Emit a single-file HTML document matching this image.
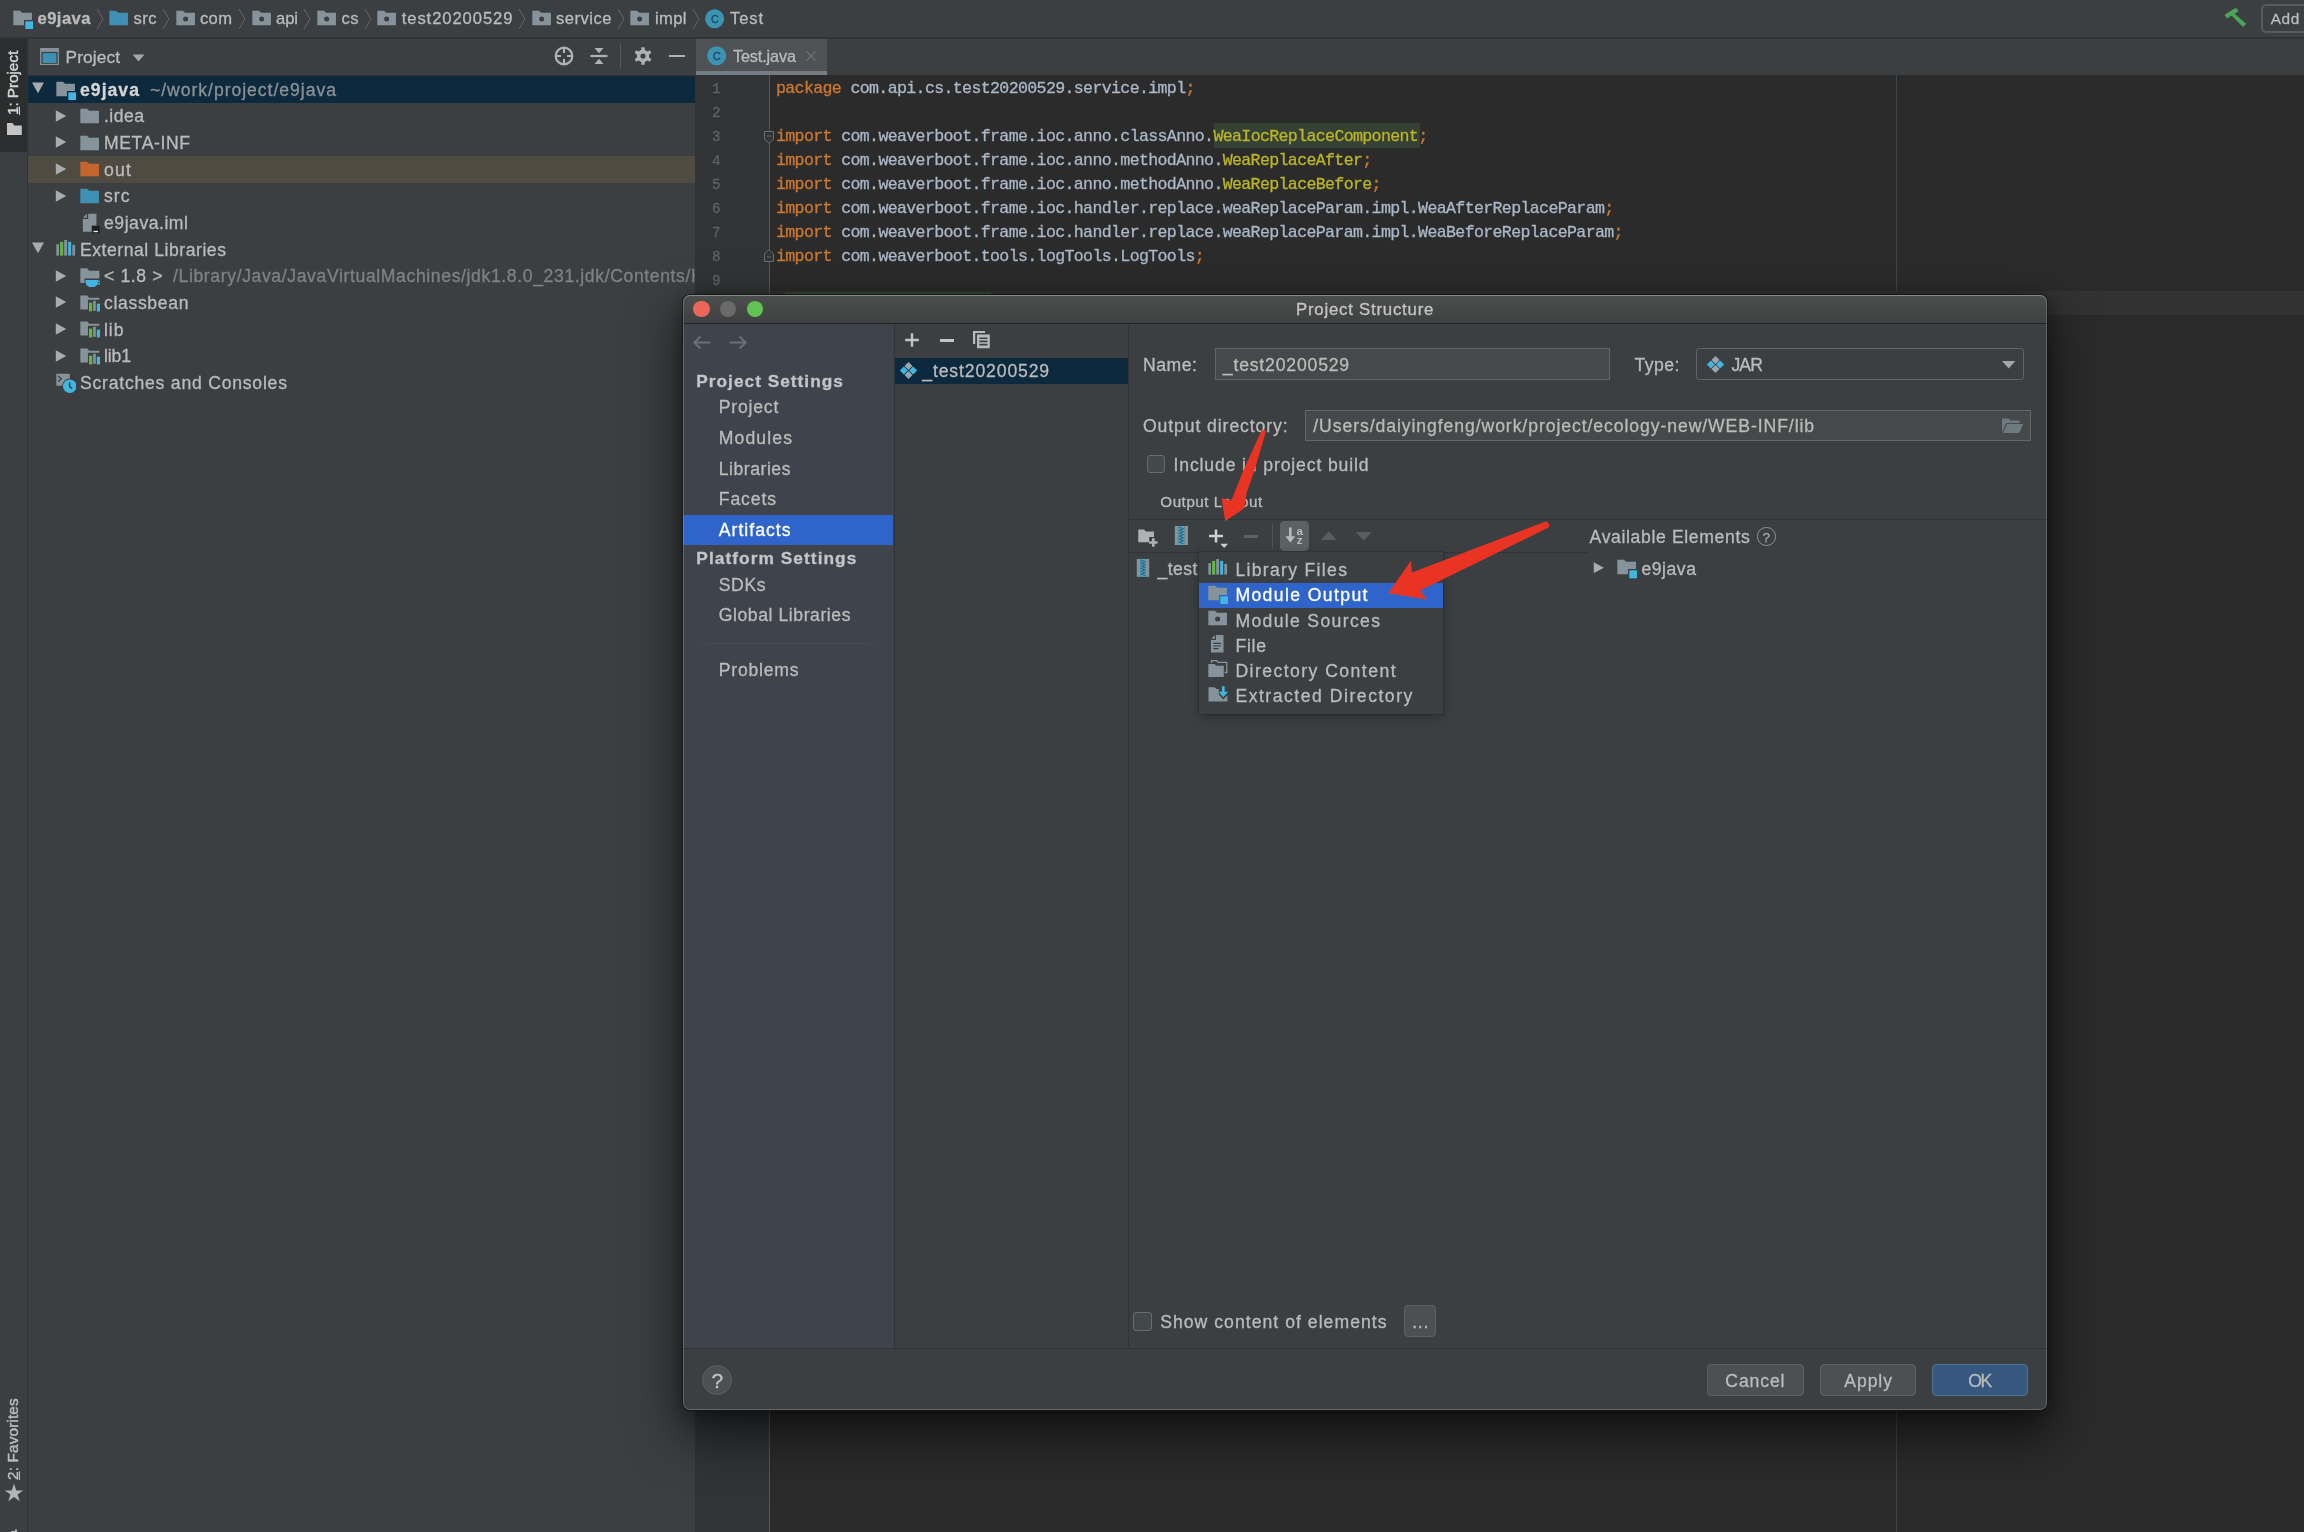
<!DOCTYPE html>
<html><head><meta charset="utf-8"><title>Project Structure</title>
<style>
html,body{margin:0;padding:0}
body{width:2304px;height:1532px;overflow:hidden;background:#3c3f41;position:relative;font-family:"Liberation Sans",sans-serif;}
.t{position:absolute;white-space:pre;-webkit-text-stroke:0.3px;}
#root{position:absolute;left:0;top:0;width:2304px;height:1532px;will-change:transform;}
.b{position:absolute;box-sizing:border-box;}
</style></head><body>

<div id="root">
<div class="b" style="left:0.0px;top:0.0px;width:2304.0px;height:37.0px;background:#3c3f41"></div>
<div class="b" style="left:0.0px;top:37.2px;width:2304.0px;height:1.8px;background:#313334"></div>
<svg class="b" style="left:11.7px;top:7.8px;" width="21.3" height="21.3" viewBox="0 0 16 16"><path fill="#87939a" d="M1 2H6L7.6 3.5H15V9H9V13H1Z"/><rect x="10" y="10" width="6" height="6" fill="#40b6e0"/></svg>
<span class="t" style="left:37.5px;top:9px;font-size:16.60px;line-height:19px;color:#bbbbbb;letter-spacing:0.445px;font-weight:700;">e9java</span>
<svg class="b" style="left:95.5px;top:8px" width="8" height="22" viewBox="0 0 8 22"><path d="M1 1L7 11L1 21" fill="none" stroke="#63676a" stroke-width="1"/></svg>
<svg class="b" style="left:107.7px;top:7.8px;" width="21.3" height="21.3" viewBox="0 0 16 16"><path fill="#3e90b5" d="M1 2H6L7.6 3.5H15V13H1Z"/></svg>
<span class="t" style="left:133.5px;top:9px;font-size:16.60px;line-height:19px;color:#bbbbbb;letter-spacing:0.436px;">src</span>
<svg class="b" style="left:162.0px;top:8px" width="8" height="22" viewBox="0 0 8 22"><path d="M1 1L7 11L1 21" fill="none" stroke="#63676a" stroke-width="1"/></svg>
<svg class="b" style="left:174.7px;top:7.8px;" width="21.3" height="21.3" viewBox="0 0 16 16"><path fill="#87939a" fill-rule="evenodd" d="M1 2H6L7.6 3.5H15V13H1ZM8 6.4a1.9 1.9 0 1 0 0 3.8a1.9 1.9 0 1 0 0-3.8Z"/></svg>
<span class="t" style="left:200.0px;top:9px;font-size:16.60px;line-height:19px;color:#bbbbbb;letter-spacing:0.319px;">com</span>
<svg class="b" style="left:238.0px;top:8px" width="8" height="22" viewBox="0 0 8 22"><path d="M1 1L7 11L1 21" fill="none" stroke="#63676a" stroke-width="1"/></svg>
<svg class="b" style="left:250.7px;top:7.8px;" width="21.3" height="21.3" viewBox="0 0 16 16"><path fill="#87939a" fill-rule="evenodd" d="M1 2H6L7.6 3.5H15V13H1ZM8 6.4a1.9 1.9 0 1 0 0 3.8a1.9 1.9 0 1 0 0-3.8Z"/></svg>
<span class="t" style="left:276.0px;top:9px;font-size:16.60px;line-height:19px;color:#bbbbbb;letter-spacing:-0.077px;">api</span>
<svg class="b" style="left:303.0px;top:8px" width="8" height="22" viewBox="0 0 8 22"><path d="M1 1L7 11L1 21" fill="none" stroke="#63676a" stroke-width="1"/></svg>
<svg class="b" style="left:315.7px;top:7.8px;" width="21.3" height="21.3" viewBox="0 0 16 16"><path fill="#87939a" fill-rule="evenodd" d="M1 2H6L7.6 3.5H15V13H1ZM8 6.4a1.9 1.9 0 1 0 0 3.8a1.9 1.9 0 1 0 0-3.8Z"/></svg>
<span class="t" style="left:341.5px;top:9px;font-size:16.60px;line-height:19px;color:#bbbbbb;letter-spacing:0.400px;">cs</span>
<svg class="b" style="left:364.0px;top:8px" width="8" height="22" viewBox="0 0 8 22"><path d="M1 1L7 11L1 21" fill="none" stroke="#63676a" stroke-width="1"/></svg>
<svg class="b" style="left:375.7px;top:7.8px;" width="21.3" height="21.3" viewBox="0 0 16 16"><path fill="#87939a" fill-rule="evenodd" d="M1 2H6L7.6 3.5H15V13H1ZM8 6.4a1.9 1.9 0 1 0 0 3.8a1.9 1.9 0 1 0 0-3.8Z"/></svg>
<span class="t" style="left:401.7px;top:9px;font-size:16.60px;line-height:19px;color:#bbbbbb;letter-spacing:0.926px;">test20200529</span>
<svg class="b" style="left:518.0px;top:8px" width="8" height="22" viewBox="0 0 8 22"><path d="M1 1L7 11L1 21" fill="none" stroke="#63676a" stroke-width="1"/></svg>
<svg class="b" style="left:530.7px;top:7.8px;" width="21.3" height="21.3" viewBox="0 0 16 16"><path fill="#87939a" fill-rule="evenodd" d="M1 2H6L7.6 3.5H15V13H1ZM8 6.4a1.9 1.9 0 1 0 0 3.8a1.9 1.9 0 1 0 0-3.8Z"/></svg>
<span class="t" style="left:556.0px;top:9px;font-size:16.60px;line-height:19px;color:#bbbbbb;letter-spacing:0.486px;">service</span>
<svg class="b" style="left:617.0px;top:8px" width="8" height="22" viewBox="0 0 8 22"><path d="M1 1L7 11L1 21" fill="none" stroke="#63676a" stroke-width="1"/></svg>
<svg class="b" style="left:629.2px;top:7.8px;" width="21.3" height="21.3" viewBox="0 0 16 16"><path fill="#87939a" fill-rule="evenodd" d="M1 2H6L7.6 3.5H15V13H1ZM8 6.4a1.9 1.9 0 1 0 0 3.8a1.9 1.9 0 1 0 0-3.8Z"/></svg>
<span class="t" style="left:655.0px;top:9px;font-size:16.60px;line-height:19px;color:#bbbbbb;letter-spacing:0.354px;">impl</span>
<svg class="b" style="left:691.5px;top:8px" width="8" height="22" viewBox="0 0 8 22"><path d="M1 1L7 11L1 21" fill="none" stroke="#63676a" stroke-width="1"/></svg>
<svg class="b" style="left:703.8px;top:7.8px;" width="21.3" height="21.3" viewBox="0 0 16 16"><circle cx="8" cy="8" r="7.15" fill="#3d93b4"/><text x="8.1" y="11.4" text-anchor="middle" font-family="Liberation Sans, sans-serif" font-size="8" fill="#1c4a5e" stroke="#1c4a5e" stroke-width="0.25">C</text></svg>
<span class="t" style="left:730.0px;top:9px;font-size:16.60px;line-height:19px;color:#bbbbbb;letter-spacing:0.852px;">Test</span>
<svg class="b" style="left:2220px;top:0px" width="32" height="32" viewBox="2220 0 32 32"><path fill="#4ba457" d="M2224.6 14.7L2234.6 8.4Q2237.4 7.9 2237.9 10L2238.2 11.5L2227 18.5Z"/><path fill="#4ba457" d="M2233.2 12.4L2246.2 23.7L2243 27.1L2230.8 14.8Z"/></svg>
<div class="b" style="left:2261.3px;top:3.9px;width:60.0px;height:29.5px;border:2px solid #565b5e;border-radius:5.5px"></div>
<span class="t" style="left:2270.8px;top:10px;font-size:15.40px;line-height:17px;color:#bbbbbb;letter-spacing:0.549px;">Add</span>
<div class="b" style="left:0.0px;top:38.5px;width:27.0px;height:1494.0px;background:#3c3f41"></div>
<div class="b" style="left:27.0px;top:38.5px;width:1.0px;height:1494.0px;background:#323232"></div>
<div class="b" style="left:0.0px;top:38.5px;width:27.0px;height:113.0px;background:#2b2d2e"></div>
<span class="t" style="left:13.2px;top:114.9px;font-size:15.4px;line-height:20px;color:#d4d4d4;letter-spacing:-0.095px;-webkit-text-stroke:0.45px;transform-origin:0 0;transform:rotate(-90deg) translateY(-10px)"><u>1</u>: Project</span>
<svg class="b" style="left:5.5px;top:121px" width="17" height="15" viewBox="0 0 17 15"><path fill="#c4c4c4" d="M1 2H6.6L8.2 4.6H15.8V14H1Z"/></svg>
<span class="t" style="left:13.2px;top:1479.8px;font-size:15.4px;line-height:20px;color:#bbbbbb;letter-spacing:0.122px;-webkit-text-stroke:0.45px;transform-origin:0 0;transform:rotate(-90deg) translateY(-10px)"><u>2</u>: Favorites</span>
<svg class="b" style="left:4px;top:1483px" width="20" height="20" viewBox="0 0 20 20"><path fill="#b4b4b4" d="M10 0.8L12.3 7.4H19.2L13.6 11.5L15.7 18.2L10 14.1L4.3 18.2L6.4 11.5L0.8 7.4H7.7Z"/></svg>
<svg class="b" style="left:6px;top:1529px" width="16" height="4" viewBox="0 0 16 4"><path fill="#b4b4b4" d="M5 4V2H9V0.5H11V4Z"/></svg>
<div class="b" style="left:28.0px;top:38.5px;width:666.6px;height:36.0px;background:#3c3f41"></div>
<svg class="b" style="left:40px;top:48px" width="19" height="17.2" viewBox="0 0 19 17.2"><rect x="0.7" y="0.7" width="17.6" height="15.8" fill="none" stroke="#87939a" stroke-width="1.3"/><rect x="0.7" y="0.7" width="17.6" height="3.2" fill="#87939a"/><rect x="2.6" y="5.1" width="13.8" height="9.9" fill="#3e90b5"/></svg>
<span class="t" style="left:65.5px;top:47px;font-size:17.30px;line-height:20px;color:#bbbbbb;letter-spacing:0.109px;">Project</span>
<svg class="b" style="left:132px;top:53.5px" width="13" height="8" viewBox="0 0 13 8"><path fill="#a4a6a7" d="M0.5 0.5H12.5L6.5 7.5Z"/></svg>
<svg class="b" style="left:553px;top:45px" width="22" height="22" viewBox="0 0 22 22"><circle cx="11" cy="11" r="8.3" fill="none" stroke="#afb1b3" stroke-width="2.2"/><path stroke="#afb1b3" stroke-width="2.2" d="M11 2.5V8M11 14V19.5M2.5 11H8M14 11H19.5"/></svg>
<svg class="b" style="left:588px;top:45px" width="22" height="22" viewBox="0 0 22 22"><path stroke="#afb1b3" stroke-width="2.2" d="M2.5 11H19.5"/><path fill="#afb1b3" d="M6.5 3H15.5L11 8.2ZM6.5 19H15.5L11 13.8Z"/></svg>
<div class="b" style="left:620.0px;top:43.0px;width:1.0px;height:26.0px;background:#55585a"></div>
<svg class="b" style="left:631.5px;top:45px" width="22" height="22" viewBox="0 0 22 22"><g fill="#afb1b3"><circle cx="11" cy="11" r="6.2"/><g id="teeth"><rect x="9.3" y="2.2" width="3.4" height="17.6" rx="0.6"/><rect x="9.3" y="2.2" width="3.4" height="17.6" rx="0.6" transform="rotate(60 11 11)"/><rect x="9.3" y="2.2" width="3.4" height="17.6" rx="0.6" transform="rotate(120 11 11)"/></g></g><circle cx="11" cy="11" r="2.6" fill="#3c3f41"/></svg>
<div class="b" style="left:669.0px;top:54.8px;width:16.0px;height:2.4px;background:#afb1b3"></div>
<div class="b" style="left:28.0px;top:74.5px;width:666.6px;height:1.2px;background:#323232"></div>
<div class="b" style="left:28.0px;top:76.0px;width:666.6px;height:26.7px;background:#0d293e"></div>
<div class="b" style="left:28.0px;top:156.0px;width:666.6px;height:26.7px;background:#4f4b41"></div>
<svg class="b" style="left:29.2px;top:78.9px;" width="18.0" height="18.0" viewBox="0 0 16 16"><path fill="#a9abac" d="M2.7 3.2H13.3L8 12.7Z"/></svg>
<svg class="b" style="left:54.7px;top:79.1px;" width="21.3" height="21.3" viewBox="0 0 16 16"><path fill="#87939a" d="M1 2H6L7.6 3.5H15V9H9V13H1Z"/><rect x="10" y="10" width="6" height="6" fill="#40b6e0"/></svg>
<span class="t" style="left:80.0px;top:80px;font-size:17.60px;line-height:20px;color:#d4d4d4;letter-spacing:1.033px;font-weight:700;">e9java</span>
<span class="t" style="left:150.0px;top:80px;font-size:17.60px;line-height:20px;color:#8c9296;letter-spacing:0.960px;">~/work/project/e9java</span>
<svg class="b" style="left:51.8px;top:106.6px;" width="18.0" height="18.0" viewBox="0 0 16 16"><path fill="#a9abac" d="M3.4 2.9L12.65 8L3.4 13.1Z"/></svg>
<svg class="b" style="left:78.7px;top:105.8px;" width="21.3" height="21.3" viewBox="0 0 16 16"><path fill="#87939a" d="M1 2H6L7.6 3.5H15V13H1Z"/></svg>
<span class="t" style="left:104.0px;top:106px;font-size:17.60px;line-height:20px;color:#bbbbbb;letter-spacing:0.459px;">.idea</span>
<svg class="b" style="left:51.8px;top:133.3px;" width="18.0" height="18.0" viewBox="0 0 16 16"><path fill="#a9abac" d="M3.4 2.9L12.65 8L3.4 13.1Z"/></svg>
<svg class="b" style="left:78.7px;top:132.5px;" width="21.3" height="21.3" viewBox="0 0 16 16"><path fill="#87939a" d="M1 2H6L7.6 3.5H15V13H1Z"/></svg>
<span class="t" style="left:104.0px;top:133px;font-size:17.60px;line-height:20px;color:#bbbbbb;letter-spacing:0.600px;">META-INF</span>
<svg class="b" style="left:51.8px;top:159.9px;" width="18.0" height="18.0" viewBox="0 0 16 16"><path fill="#a9abac" d="M3.4 2.9L12.65 8L3.4 13.1Z"/></svg>
<svg class="b" style="left:78.7px;top:159.1px;" width="21.3" height="21.3" viewBox="0 0 16 16"><path fill="#c2652e" d="M1 2H6L7.6 3.5H15V13H1Z"/></svg>
<span class="t" style="left:104.0px;top:160px;font-size:17.60px;line-height:20px;color:#bbbbbb;letter-spacing:1.267px;">out</span>
<svg class="b" style="left:51.8px;top:186.6px;" width="18.0" height="18.0" viewBox="0 0 16 16"><path fill="#a9abac" d="M3.4 2.9L12.65 8L3.4 13.1Z"/></svg>
<svg class="b" style="left:78.7px;top:185.8px;" width="21.3" height="21.3" viewBox="0 0 16 16"><path fill="#3e90b5" d="M1 2H6L7.6 3.5H15V13H1Z"/></svg>
<span class="t" style="left:104.0px;top:186px;font-size:17.60px;line-height:20px;color:#bbbbbb;letter-spacing:1.019px;">src</span>
<svg class="b" style="left:78.7px;top:212.5px;" width="21.3" height="21.3" viewBox="0 0 16 16"><path fill="#87939a" d="M6.9 0.5H13.1V9.3H9.5V14.1H2.9V4.6H6.9Z"/><path fill="#87939a" d="M5.9 0.6V3.6H2.9Z"/><rect x="9.95" y="9.75" width="5.65" height="5.4" fill="#1e1e1e"/><rect x="10.9" y="13.4" width="3.4" height="1" fill="#eeeeee"/></svg>
<span class="t" style="left:104.0px;top:213px;font-size:17.60px;line-height:20px;color:#bbbbbb;letter-spacing:0.529px;">e9java.iml</span>
<svg class="b" style="left:29.2px;top:239.0px;" width="18.0" height="18.0" viewBox="0 0 16 16"><path fill="#a9abac" d="M2.7 3.2H13.3L8 12.7Z"/></svg>
<svg class="b" style="left:54.7px;top:239.2px;" width="21.3" height="21.3" viewBox="0 0 16 16"><rect x="1" y="3.9" width="2" height="8.6" fill="#87939a"/><rect x="3.8" y="2.15" width="2.4" height="10.35" fill="#62b543"/><rect x="6.9" y="0.8" width="2.15" height="11.7" fill="#87939a"/><rect x="9.85" y="2.15" width="2.3" height="10.35" fill="#40b6e0"/><rect x="13.05" y="4.4" width="2" height="8.1" fill="#87939a"/></svg>
<span class="t" style="left:80.0px;top:240px;font-size:17.60px;line-height:20px;color:#bbbbbb;letter-spacing:0.532px;">External Libraries</span>
<svg class="b" style="left:51.8px;top:266.6px;" width="18.0" height="18.0" viewBox="0 0 16 16"><path fill="#a9abac" d="M3.4 2.9L12.65 8L3.4 13.1Z"/></svg>
<svg class="b" style="left:78.7px;top:265.8px;" width="21.3" height="21.3" viewBox="0 0 16 16"><path fill="#87939a" d="M1 1.6H6.2L7.6 3.5H15.3V9.4H4.1V12.8H1Z"/><path fill="#40b6e0" d="M4.8 10.6H14.3V11.4C14.3 14 12.4 16 10 16H9.1C6.7 16 4.8 14 4.8 11.4Z"/><path fill="none" stroke="#40b6e0" stroke-width="0.9" d="M14 11.3H15A0.9 0.9 0 0 1 15 13.4H13.6"/></svg>
<span class="t" style="left:104.0px;top:266px;font-size:17.60px;line-height:20px;color:#bbbbbb;letter-spacing:0.616px;">&lt; 1.8 &gt;</span>
<div class="b" style="left:173px;top:262px;width:521.6px;height:28px;overflow:hidden">

<span class="t" style="left:0.0px;top:4px;font-size:17.60px;line-height:20px;color:#7d8285;letter-spacing:0.62px;">/Library/Java/JavaVirtualMachines/jdk1.8.0_231.jdk/Contents/Home</span>
</div>
<svg class="b" style="left:51.8px;top:293.3px;" width="18.0" height="18.0" viewBox="0 0 16 16"><path fill="#a9abac" d="M3.4 2.9L12.65 8L3.4 13.1Z"/></svg>
<svg class="b" style="left:78.7px;top:292.5px;" width="21.3" height="21.3" viewBox="0 0 16 16"><path fill="#87939a" d="M1 1.8H6.2L7.6 3.5H15.3V5H6.7V12.4H1Z"/><rect x="7.5" y="7.2" width="2.45" height="6.65" fill="#62b543"/><rect x="10.65" y="5.8" width="1.95" height="7.6" fill="#87939a"/><rect x="13.4" y="8" width="2.4" height="5.85" fill="#40b6e0"/></svg>
<span class="t" style="left:104.0px;top:293px;font-size:17.60px;line-height:20px;color:#bbbbbb;letter-spacing:0.656px;">classbean</span>
<svg class="b" style="left:51.8px;top:320.0px;" width="18.0" height="18.0" viewBox="0 0 16 16"><path fill="#a9abac" d="M3.4 2.9L12.65 8L3.4 13.1Z"/></svg>
<svg class="b" style="left:78.7px;top:319.2px;" width="21.3" height="21.3" viewBox="0 0 16 16"><path fill="#87939a" d="M1 1.8H6.2L7.6 3.5H15.3V5H6.7V12.4H1Z"/><rect x="7.5" y="7.2" width="2.45" height="6.65" fill="#62b543"/><rect x="10.65" y="5.8" width="1.95" height="7.6" fill="#87939a"/><rect x="13.4" y="8" width="2.4" height="5.85" fill="#40b6e0"/></svg>
<span class="t" style="left:104.0px;top:320px;font-size:17.60px;line-height:20px;color:#bbbbbb;letter-spacing:0.945px;">lib</span>
<svg class="b" style="left:51.8px;top:346.6px;" width="18.0" height="18.0" viewBox="0 0 16 16"><path fill="#a9abac" d="M3.4 2.9L12.65 8L3.4 13.1Z"/></svg>
<svg class="b" style="left:78.7px;top:345.8px;" width="21.3" height="21.3" viewBox="0 0 16 16"><path fill="#87939a" d="M1 1.8H6.2L7.6 3.5H15.3V5H6.7V12.4H1Z"/><rect x="7.5" y="7.2" width="2.45" height="6.65" fill="#62b543"/><rect x="10.65" y="5.8" width="1.95" height="7.6" fill="#87939a"/><rect x="13.4" y="8" width="2.4" height="5.85" fill="#40b6e0"/></svg>
<span class="t" style="left:104.0px;top:346px;font-size:17.60px;line-height:20px;color:#bbbbbb;letter-spacing:-0.133px;">lib1</span>
<svg class="b" style="left:54.7px;top:372.5px;" width="21.3" height="21.3" viewBox="0 0 16 16"><path fill="#87939a" d="M1 0.65H11.1V4.2A5.8 5.8 0 0 0 5.4 9.65H1Z"/><path fill="none" stroke="#3c3f41" stroke-width="1" d="M2.4 2.3L4.7 4.4L2.4 6.5"/><circle cx="11.1" cy="9.9" r="5.1" fill="#40b6e0"/><path fill="none" stroke="#2b4450" stroke-width="1.1" d="M11 7V10.2L13 11.8"/></svg>
<span class="t" style="left:80.0px;top:373px;font-size:17.60px;line-height:20px;color:#bbbbbb;letter-spacing:0.773px;">Scratches and Consoles</span>
<div class="b" style="left:695.0px;top:38.5px;width:1609.0px;height:36.5px;background:#3c3f41"></div>
<div class="b" style="left:696.0px;top:39.0px;width:130.8px;height:35.5px;background:#4e5254"></div>
<div class="b" style="left:696.0px;top:70.6px;width:130.8px;height:4.1px;background:#747d85"></div>
<svg class="b" style="left:706.4px;top:45.3px;" width="21.3" height="21.3" viewBox="0 0 16 16"><circle cx="8" cy="8" r="7.15" fill="#3d93b4"/><text x="8.1" y="11.4" text-anchor="middle" font-family="Liberation Sans, sans-serif" font-size="8" fill="#1c4a5e" stroke="#1c4a5e" stroke-width="0.25">C</text></svg>
<span class="t" style="left:733.0px;top:47px;font-size:16.20px;line-height:18px;color:#bbbbbb;letter-spacing:-0.116px;">Test.java</span>
<svg class="b" style="left:805px;top:50px" width="12" height="12" viewBox="0 0 12 12"><path stroke="#6e7275" stroke-width="1.1" d="M1.5 1.5L10.5 10.5M10.5 1.5L1.5 10.5"/></svg>
<div class="b" style="left:695.0px;top:75.0px;width:1609.0px;height:1457.0px;background:#2b2b2b"></div>
<div class="b" style="left:695.0px;top:75.0px;width:74.0px;height:1457.0px;background:#313335"></div>
<div class="b" style="left:769.0px;top:75.0px;width:1.0px;height:1457.0px;background:#555555"></div>
<div class="b" style="left:1896.0px;top:75.0px;width:1.0px;height:1457.0px;background:#424445"></div>
<div class="b" style="left:770.0px;top:290.5px;width:1534.0px;height:24.0px;background:#323232"></div>
<span class="t" style="left:711.9px;top:81px;font-size:14.20px;line-height:16px;color:#606366;font-family:'Liberation Mono',monospace">1</span>
<span class="t" style="left:711.9px;top:105px;font-size:14.20px;line-height:16px;color:#606366;font-family:'Liberation Mono',monospace">2</span>
<span class="t" style="left:711.9px;top:129px;font-size:14.20px;line-height:16px;color:#606366;font-family:'Liberation Mono',monospace">3</span>
<span class="t" style="left:711.9px;top:153px;font-size:14.20px;line-height:16px;color:#606366;font-family:'Liberation Mono',monospace">4</span>
<span class="t" style="left:711.9px;top:177px;font-size:14.20px;line-height:16px;color:#606366;font-family:'Liberation Mono',monospace">5</span>
<span class="t" style="left:711.9px;top:201px;font-size:14.20px;line-height:16px;color:#606366;font-family:'Liberation Mono',monospace">6</span>
<span class="t" style="left:711.9px;top:225px;font-size:14.20px;line-height:16px;color:#606366;font-family:'Liberation Mono',monospace">7</span>
<span class="t" style="left:711.9px;top:249px;font-size:14.20px;line-height:16px;color:#606366;font-family:'Liberation Mono',monospace">8</span>
<span class="t" style="left:711.9px;top:273px;font-size:14.20px;line-height:16px;color:#606366;font-family:'Liberation Mono',monospace">9</span>
<div class="b" style="left:1214.3px;top:123.0px;width:206.0px;height:25.0px;background:#344134"></div>
<span class="t" style="left:776.0px;top:79px;font-size:16.60px;line-height:19px;font-family:'Liberation Mono',monospace;letter-spacing:-0.652px"><span style="color:#cc7832">package </span><span style="color:#a9b7c6">com.api.cs.test20200529.service.impl</span><span style="color:#cc7832">;</span></span>
<span class="t" style="left:776.0px;top:127px;font-size:16.60px;line-height:19px;font-family:'Liberation Mono',monospace;letter-spacing:-0.652px"><span style="color:#cc7832">import </span><span style="color:#a9b7c6">com.weaverboot.frame.ioc.anno.classAnno.</span><span style="color:#bbb529">WeaIocReplaceComponent</span><span style="color:#cc7832">;</span></span>
<span class="t" style="left:776.0px;top:151px;font-size:16.60px;line-height:19px;font-family:'Liberation Mono',monospace;letter-spacing:-0.652px"><span style="color:#cc7832">import </span><span style="color:#a9b7c6">com.weaverboot.frame.ioc.anno.methodAnno.</span><span style="color:#bbb529">WeaReplaceAfter</span><span style="color:#cc7832">;</span></span>
<span class="t" style="left:776.0px;top:175px;font-size:16.60px;line-height:19px;font-family:'Liberation Mono',monospace;letter-spacing:-0.652px"><span style="color:#cc7832">import </span><span style="color:#a9b7c6">com.weaverboot.frame.ioc.anno.methodAnno.</span><span style="color:#bbb529">WeaReplaceBefore</span><span style="color:#cc7832">;</span></span>
<span class="t" style="left:776.0px;top:199px;font-size:16.60px;line-height:19px;font-family:'Liberation Mono',monospace;letter-spacing:-0.652px"><span style="color:#cc7832">import </span><span style="color:#a9b7c6">com.weaverboot.frame.ioc.handler.replace.weaReplaceParam.impl.WeaAfterReplaceParam</span><span style="color:#cc7832">;</span></span>
<span class="t" style="left:776.0px;top:223px;font-size:16.60px;line-height:19px;font-family:'Liberation Mono',monospace;letter-spacing:-0.652px"><span style="color:#cc7832">import </span><span style="color:#a9b7c6">com.weaverboot.frame.ioc.handler.replace.weaReplaceParam.impl.WeaBeforeReplaceParam</span><span style="color:#cc7832">;</span></span>
<span class="t" style="left:776.0px;top:247px;font-size:16.60px;line-height:19px;font-family:'Liberation Mono',monospace;letter-spacing:-0.652px"><span style="color:#cc7832">import </span><span style="color:#a9b7c6">com.weaverboot.tools.logTools.LogTools</span><span style="color:#cc7832">;</span></span>
<svg class="b" style="left:763.2px;top:130.3px" width="12" height="15" viewBox="0 0 12 15"><path fill="#313335" stroke="#6c6f71" stroke-width="1" d="M1.5 1.5H10.5V9L6 13.5L1.5 9Z"/><path stroke="#6c6f71" stroke-width="1" d="M3.8 6H8.2"/></svg>
<svg class="b" style="left:763.2px;top:248.3px" width="12" height="15" viewBox="0 0 12 15"><path fill="#313335" stroke="#6c6f71" stroke-width="1" d="M1.5 13.5H10.5V6L6 1.5L1.5 6Z"/><path stroke="#6c6f71" stroke-width="1" d="M3.8 9H8.2"/></svg>
<div class="b" style="left:785.0px;top:292.0px;width:206.0px;height:3.0px;background:#2f4a35"></div>
<div class="b" id="dlg" style="left:683.1px;top:294.8px;width:1364.4px;height:1115.4px;background:#3c3f41;border-radius:7px;box-shadow:0 0 0 1px rgba(20,20,20,0.75),0 22px 50px 6px rgba(0,0,0,0.55),0 4px 18px rgba(0,0,0,0.35);"></div>
<div class="b" style="left:683.1px;top:294.8px;width:1364.4px;height:28.7px;background:linear-gradient(#4c4e4e,#3e4041);border-radius:7px 7px 0 0;border-top:1px solid #6a6c6c"></div>
<div class="b" style="left:683.1px;top:323.2px;width:1364.4px;height:1.2px;background:#232525"></div>
<div class="b" style="left:693.2px;top:301.1px;width:16.4px;height:16.4px;border-radius:50%;background:#ec6559"></div>
<div class="b" style="left:719.7px;top:301.1px;width:16.4px;height:16.4px;border-radius:50%;background:#6a6a6a"></div>
<div class="b" style="left:746.5px;top:301.1px;width:16.4px;height:16.4px;border-radius:50%;background:#61c354"></div>
<span class="t" style="left:1296.0px;top:300px;font-size:16.80px;line-height:19px;color:#c4c4c4;letter-spacing:0.774px;">Project Structure</span>
<div class="b" style="left:683.1px;top:324.5px;width:210.4px;height:1023.5px;background:#3f434c"></div>
<div class="b" style="left:893.5px;top:324.5px;width:1.2px;height:1023.5px;background:#323436"></div>
<div class="b" style="left:1128.0px;top:324.5px;width:1.2px;height:1023.5px;background:#323436"></div>
<div class="b" style="left:683.1px;top:1348.0px;width:1364.4px;height:1.2px;background:#323436"></div>
<svg class="b" style="left:692px;top:334px" width="20" height="17" viewBox="0 0 20 17"><path fill="none" stroke="#6a6e73" stroke-width="2.2" d="M18.5 8.5H2.5M8.5 2.5L2.5 8.5L8.5 14.5"/></svg>
<svg class="b" style="left:728px;top:334px" width="20" height="17" viewBox="0 0 20 17"><path fill="none" stroke="#6a6e73" stroke-width="2.2" d="M1.5 8.5H17.5M11.5 2.5L17.5 8.5L11.5 14.5"/></svg>
<span class="t" style="left:696.3px;top:371px;font-size:17.30px;line-height:20px;color:#c3c5c8;letter-spacing:1.000px;font-weight:700;">Project Settings</span>
<div class="b" style="left:683.1px;top:514.7px;width:210.4px;height:30.7px;background:#2f65ca"></div>
<span class="t" style="left:718.8px;top:397px;font-size:17.60px;line-height:20px;color:#bbbbbb;letter-spacing:0.787px;">Project</span>
<span class="t" style="left:718.8px;top:428px;font-size:17.60px;line-height:20px;color:#bbbbbb;letter-spacing:1.112px;">Modules</span>
<span class="t" style="left:718.8px;top:459px;font-size:17.60px;line-height:20px;color:#bbbbbb;letter-spacing:0.525px;">Libraries</span>
<span class="t" style="left:718.8px;top:489px;font-size:17.60px;line-height:20px;color:#bbbbbb;letter-spacing:0.876px;">Facets</span>
<span class="t" style="left:718.8px;top:520px;font-size:17.60px;line-height:20px;color:#ffffff;letter-spacing:1.016px;">Artifacts</span>
<span class="t" style="left:696.3px;top:548px;font-size:17.30px;line-height:20px;color:#c3c5c8;letter-spacing:1.061px;font-weight:700;">Platform Settings</span>
<span class="t" style="left:718.8px;top:575px;font-size:17.60px;line-height:20px;color:#bbbbbb;letter-spacing:0.570px;">SDKs</span>
<span class="t" style="left:718.8px;top:605px;font-size:17.60px;line-height:20px;color:#bbbbbb;letter-spacing:0.562px;">Global Libraries</span>
<div class="b" style="left:697.0px;top:643.0px;width:183.0px;height:1.2px;background:linear-gradient(90deg,#3f434c,#4b4f57 12%,#4b4f57 88%,#3f434c)"></div>
<span class="t" style="left:718.8px;top:660px;font-size:17.60px;line-height:20px;color:#bbbbbb;letter-spacing:0.766px;">Problems</span>
<svg class="b" style="left:904px;top:332.3px" width="16" height="16" viewBox="0 0 16 16"><path stroke="#c4c4c4" stroke-width="2.4" d="M8 1.2V14.8M1.2 8H14.8"/></svg>
<div class="b" style="left:939.8px;top:339.0px;width:13.8px;height:2.6px;background:#c4c4c4"></div>
<svg class="b" style="left:972px;top:329.5px" width="19" height="19" viewBox="0 0 19 19"><path fill="#b9b9b9" d="M1 1H13V3H3.2V14H1Z"/><path fill="#b9b9b9" fill-rule="evenodd" d="M5 4.5H17.8V18.2H5ZM7.3 7.4V9H15.5V7.4ZM7.3 10.6V12.2H15.5V10.6ZM7.3 13.8V15.4H15.5V13.8Z"/></svg>
<div class="b" style="left:895.0px;top:357.5px;width:233.0px;height:26.4px;background:#0d293e"></div>
<svg class="b" style="left:897.5px;top:360.2px;" width="21.0" height="21.0" viewBox="0 0 16 16"><path fill="#9aa7b0" d="M8.00 1.45L11.05 4.50L8.00 7.55L4.95 4.50Z"/><path fill="#40b6e0" d="M4.50 4.95L7.55 8.00L4.50 11.05L1.45 8.00Z"/><path fill="#40b6e0" d="M11.50 4.95L14.55 8.00L11.50 11.05L8.45 8.00Z"/><path fill="#9aa7b0" d="M8.00 8.45L11.05 11.50L8.00 14.55L4.95 11.50Z"/></svg>
<span class="t" style="left:922.3px;top:361px;font-size:17.60px;line-height:20px;color:#bbbbbb;letter-spacing:0.870px;">_test20200529</span>
<span class="t" style="left:1143.0px;top:355px;font-size:17.60px;line-height:20px;color:#bbbbbb;letter-spacing:0.540px;">Name:</span>
<div class="b" style="left:1214.8px;top:348.0px;width:394.8px;height:31.5px;background:#45494a;border:1.3px solid #646464"></div>
<span class="t" style="left:1222.8px;top:355px;font-size:17.60px;line-height:20px;color:#bbbbbb;letter-spacing:0.828px;">_test20200529</span>
<span class="t" style="left:1634.5px;top:355px;font-size:17.60px;line-height:20px;color:#bbbbbb;letter-spacing:0.488px;">Type:</span>
<div class="b" style="left:1696.3px;top:348.2px;width:328.0px;height:31.5px;background:#3c3f41;border:1.3px solid #646464;border-radius:3.5px"></div>
<svg class="b" style="left:1704.5px;top:353.7px;" width="21.0" height="21.0" viewBox="0 0 16 16"><path fill="#9aa7b0" d="M8.00 1.45L11.05 4.50L8.00 7.55L4.95 4.50Z"/><path fill="#40b6e0" d="M4.50 4.95L7.55 8.00L4.50 11.05L1.45 8.00Z"/><path fill="#40b6e0" d="M11.50 4.95L14.55 8.00L11.50 11.05L8.45 8.00Z"/><path fill="#9aa7b0" d="M8.00 8.45L11.05 11.50L8.00 14.55L4.95 11.50Z"/></svg>
<span class="t" style="left:1731.4px;top:355px;font-size:17.60px;line-height:20px;color:#bbbbbb;letter-spacing:-0.825px;">JAR</span>
<svg class="b" style="left:2002.4px;top:361px" width="13.4" height="7.5" viewBox="0 0 13.4 7.5"><path fill="#a3a5a6" d="M0 0H13.4L6.7 7.5Z"/></svg>
<span class="t" style="left:1143.0px;top:416px;font-size:17.60px;line-height:20px;color:#bbbbbb;letter-spacing:0.912px;">Output directory:</span>
<div class="b" style="left:1305.3px;top:409.7px;width:726.0px;height:31.0px;background:#45494a;border:1.3px solid #646464"></div>
<span class="t" style="left:1313.3px;top:416px;font-size:17.60px;line-height:20px;color:#bbbbbb;letter-spacing:0.927px;">/Users/daiyingfeng/work/project/ecology-new/WEB-INF/lib</span>
<svg class="b" style="left:2000.5px;top:417px" width="23" height="17" viewBox="0 0 23 17"><path fill="#6f7a80" d="M1 15.8V1.5H7.5L9.3 3.5H18.5V6H5.2L1 15.8Z"/><path fill="#6f7a80" d="M6 7H22.2L18.2 16H2.2Z"/></svg>
<div class="b" style="left:1146.6px;top:454.7px;width:18.6px;height:18.8px;background:#43494a;border:1.3px solid #6b6b6b;border-radius:3px"></div>
<span class="t" style="left:1173.5px;top:455px;font-size:17.60px;line-height:20px;color:#bbbbbb;letter-spacing:0.868px;">Include in project build</span>
<span class="t" style="left:1160.3px;top:493px;font-size:15.20px;line-height:17px;color:#bbbbbb;letter-spacing:0.534px;">Output Layout</span>
<div class="b" style="left:1129.2px;top:518.8px;width:918.3px;height:1.2px;background:#323436"></div>
<svg class="b" style="left:1137px;top:527px" width="22" height="21" viewBox="0 0 22 21"><path fill="#afb1b3" d="M1.3 2.6H7L8.8 4.4H17V10H12.2V15.2H1.3Z"/><path stroke="#afb1b3" stroke-width="2.7" d="M16.3 11.3V19.7M12.1 15.5H20.5"/></svg>
<svg class="b" style="left:1174px;top:525.4px" width="14.8" height="21" viewBox="0 0 14.8 21"><rect x="0.8" y="1" width="3.8" height="19" fill="#87939a"/><rect x="10.2" y="1" width="3.8" height="19" fill="#87939a"/><rect x="4.6" y="1" width="5.6" height="19" fill="#43a9d2"/><path fill="none" stroke="#2f5568" stroke-width="0.9" d="M5.3 2.2L9.5 3.7L5.3 5.2L9.5 6.7L5.3 8.2L9.5 9.7L5.3 11.2L9.5 12.7L5.3 14.2L9.5 15.7L5.3 17.2L9.5 18.7"/></svg>
<svg class="b" style="left:1208px;top:528px" width="22" height="21" viewBox="0 0 22 21"><path stroke="#d0d0d0" stroke-width="2.5" d="M8 1.4V14.6M1 8H15"/><path fill="#d0d0d0" d="M12.3 15.8H20L16.15 20Z"/></svg>
<div class="b" style="left:1243.8px;top:534.8px;width:13.8px;height:2.8px;background:#5e6163"></div>
<div class="b" style="left:1272.3px;top:523.0px;width:1.0px;height:25.5px;background:#505355"></div>
<div class="b" style="left:1279.9px;top:521.3px;width:29.3px;height:29.5px;background:#5c6164;border-radius:4.5px"></div>
<svg class="b" style="left:1282.5px;top:525px" width="25" height="22" viewBox="0 0 25 22"><path fill="none" stroke="#b8babb" stroke-width="2.6" d="M7.3 2.5V16"/><path fill="#b8babb" d="M2.3 11.2H12.3L7.3 17.5Z"/><text x="13.4" y="9.6" font-family="Liberation Sans, sans-serif" font-weight="700" font-size="11.6" fill="#b8babb">a</text><text x="13.8" y="18.6" font-family="Liberation Sans, sans-serif" font-weight="700" font-size="11.6" fill="#b8babb">z</text></svg>
<svg class="b" style="left:1321.4px;top:531.3px" width="15.6" height="9" viewBox="0 0 15.6 9"><path fill="#5a5d5f" d="M0 9H15.6L7.8 0.3Z"/></svg>
<svg class="b" style="left:1355.8px;top:531.8px" width="15.6" height="9" viewBox="0 0 15.6 9"><path fill="#5a5d5f" d="M0 0H15.6L7.8 8.7Z"/></svg>
<div class="b" style="left:1129.2px;top:552.0px;width:458.5px;height:1.2px;background:#323436"></div>
<svg class="b" style="left:1135.6px;top:558.3px" width="14" height="19.8" viewBox="0 0 14.8 21"><rect x="0.8" y="1" width="3.8" height="19" fill="#87939a"/><rect x="10.2" y="1" width="3.8" height="19" fill="#87939a"/><rect x="4.6" y="1" width="5.6" height="19" fill="#43a9d2"/><path fill="none" stroke="#2f5568" stroke-width="0.9" d="M5.3 2.2L9.5 3.7L5.3 5.2L9.5 6.7L5.3 8.2L9.5 9.7L5.3 11.2L9.5 12.7L5.3 14.2L9.5 15.7L5.3 17.2L9.5 18.7"/></svg>
<span class="t" style="left:1157.4px;top:559px;font-size:17.60px;line-height:20px;color:#bbbbbb;letter-spacing:0.486px;">_test</span>
<span class="t" style="left:1589.6px;top:527px;font-size:17.60px;line-height:20px;color:#bbbbbb;letter-spacing:0.637px;">Available Elements</span>
<div class="b" style="left:1757.3px;top:527.3px;width:18.4px;height:18.4px;border:1.6px solid #8a9299;border-radius:50%"></div>
<span class="t" style="left:1762.6px;top:530px;font-size:13.50px;line-height:15px;color:#a0a2a3;">?</span>
<svg class="b" style="left:1590.0px;top:559.0px;" width="17.5" height="17.5" viewBox="0 0 16 16"><path fill="#a9abac" d="M3.4 2.9L12.65 8L3.4 13.1Z"/></svg>
<svg class="b" style="left:1615.6px;top:557.3px;" width="21.3" height="21.3" viewBox="0 0 16 16"><path fill="#87939a" d="M1 2H6L7.6 3.5H15V9H9V13H1Z"/><rect x="10" y="10" width="6" height="6" fill="#40b6e0"/></svg>
<span class="t" style="left:1641.5px;top:559px;font-size:17.60px;line-height:20px;color:#bbbbbb;letter-spacing:0.527px;">e9java</span>
<div class="b" style="left:1198.5px;top:551.8px;width:244.2px;height:162.5px;background:#3c3f41;box-shadow:0 0 0 1px rgba(0,0,0,0.12),0 3px 10px rgba(0,0,0,0.28)"></div>
<div class="b" style="left:1198.5px;top:582.8px;width:244.2px;height:25.3px;background:#2f65ca"></div>
<svg class="b" style="left:1206.5px;top:557.5px;" width="21.3" height="21.3" viewBox="0 0 16 16"><rect x="1" y="3.9" width="2" height="8.6" fill="#87939a"/><rect x="3.8" y="2.15" width="2.4" height="10.35" fill="#62b543"/><rect x="6.9" y="0.8" width="2.15" height="11.7" fill="#87939a"/><rect x="9.85" y="2.15" width="2.3" height="10.35" fill="#40b6e0"/><rect x="13.05" y="4.4" width="2" height="8.1" fill="#87939a"/></svg>
<span class="t" style="left:1235.4px;top:560px;font-size:17.60px;line-height:20px;color:#bbbbbb;letter-spacing:1.313px;">Library Files</span>
<svg class="b" style="left:1206.5px;top:582.8px;" width="21.3" height="21.3" viewBox="0 0 16 16"><path fill="#87939a" d="M1 2H6L7.6 3.5H15V9H9V13H1Z"/><rect x="10" y="10" width="6" height="6" fill="#40b6e0"/></svg>
<span class="t" style="left:1235.4px;top:585px;font-size:17.60px;line-height:20px;color:#ffffff;letter-spacing:1.387px;">Module Output</span>
<svg class="b" style="left:1206.5px;top:608.0px;" width="21.3" height="21.3" viewBox="0 0 16 16"><path fill="#87939a" fill-rule="evenodd" d="M1 2H6L7.6 3.5H15V13H1ZM8 6.4a1.9 1.9 0 1 0 0 3.8a1.9 1.9 0 1 0 0-3.8Z"/></svg>
<span class="t" style="left:1235.4px;top:611px;font-size:17.60px;line-height:20px;color:#bbbbbb;letter-spacing:1.340px;">Module Sources</span>
<span class="t" style="left:1235.4px;top:636px;font-size:17.60px;line-height:20px;color:#bbbbbb;letter-spacing:0.746px;">File</span>
<span class="t" style="left:1235.4px;top:661px;font-size:17.60px;line-height:20px;color:#bbbbbb;letter-spacing:1.453px;">Directory Content</span>
<span class="t" style="left:1235.4px;top:686px;font-size:17.60px;line-height:20px;color:#bbbbbb;letter-spacing:1.520px;">Extracted Directory</span>
<svg class="b" style="left:1209px;top:633.8px" width="17" height="20" viewBox="0 0 17 20"><path fill="#87939a" d="M7 1H14.5V18.5H2V6H7Z"/><path fill="#87939a" d="M5.8 1.2V4.8H2.2Z"/><path stroke="#3c3f41" stroke-width="1.2" d="M4.3 9.3H12M4.3 12H12M4.3 14.7H9.5"/></svg>
<svg class="b" style="left:1206.5px;top:658.8px" width="22" height="20" viewBox="0 0 22 20"><path fill="none" stroke="#87939a" stroke-width="1.3" d="M4.5 4V1.6H9.5L11 3.3H19.8V13.5H17.5"/><path fill="#87939a" d="M1.3 5H7.6L9.4 6.8H16.8V18H1.3Z"/></svg>
<svg class="b" style="left:1206.5px;top:684.9px" width="22" height="20" viewBox="0 0 22 20"><path fill="#87939a" d="M1.5 2.3H7.6L9.4 4.1H11.8V9.4L16.3 14.4L20.4 10.2V16.4H1.5Z"/><path stroke="#40b6e0" stroke-width="2.7" d="M16.3 1.2V8"/><path fill="#40b6e0" d="M11.6 6.8H21L16.3 12.2Z"/></svg>
<div class="b" style="left:1133.0px;top:1312.1px;width:18.6px;height:18.8px;background:#43494a;border:1.3px solid #6b6b6b;border-radius:3px"></div>
<span class="t" style="left:1160.2px;top:1312px;font-size:17.60px;line-height:20px;color:#bbbbbb;letter-spacing:1.038px;">Show content of elements</span>
<div class="b" style="left:1404.0px;top:1305.3px;width:32.0px;height:32.0px;background:#4c5052;border:1.3px solid #5e6060;border-radius:4px"></div>
<span class="t" style="left:1412.3px;top:1312px;font-size:17.60px;line-height:20px;color:#bbbbbb;letter-spacing:0.666px;">...</span>
<div class="b" style="left:701.8px;top:1364.8px;width:30.4px;height:30.4px;background:#4c5052;border:1.3px solid #5e6060;border-radius:50%"></div>
<span class="t" style="left:711.6px;top:1369px;font-size:21.00px;line-height:23px;color:#c4c4c4;">?</span>
<div class="b" style="left:1706.7px;top:1364.2px;width:97.3px;height:31.8px;background:#4c5052;border:1.3px solid #5e6060;border-radius:4px"></div>
<span class="t" style="left:1725.3px;top:1371px;font-size:17.60px;line-height:20px;color:#bbbbbb;letter-spacing:0.883px;">Cancel</span>
<div class="b" style="left:1819.8px;top:1364.2px;width:96.2px;height:31.8px;background:#4c5052;border:1.3px solid #5e6060;border-radius:4px"></div>
<span class="t" style="left:1844.3px;top:1371px;font-size:17.60px;line-height:20px;color:#bbbbbb;letter-spacing:0.918px;">Apply</span>
<div class="b" style="left:1931.7px;top:1364.2px;width:96.3px;height:31.8px;background:#365880;border:1.3px solid #4c708c;border-radius:4px"></div>
<span class="t" style="left:1968.3px;top:1371px;font-size:17.60px;line-height:20px;color:#bbbbbb;letter-spacing:-1.429px;">OK</span>
<div class="b" style="left:683.1px;top:294.8px;width:1364.4px;height:1115.4px;border:1px solid rgba(255,255,255,0.2);border-radius:7px;pointer-events:none"></div>
<svg class="b" style="left:0;top:0" width="2304" height="1532" viewBox="0 0 2304 1532">
<path fill="#e93424" d="M1261.8 430L1266.1 430.8L1254.6 470.2L1246.7 492.5L1244.2 508.3L1225.2 521.2L1221.6 497.9L1231.3 500.4L1243.5 470.2Z"/>
<path fill="#e93424" d="M1412 572.5L1543.6 522.3A3.4 3.4 0 0 1 1547.6 528L1420.2 590.5L1426.9 599.5L1388.2 593.2L1410.9 560.8Z"/>
</svg>
</div>
</body></html>
